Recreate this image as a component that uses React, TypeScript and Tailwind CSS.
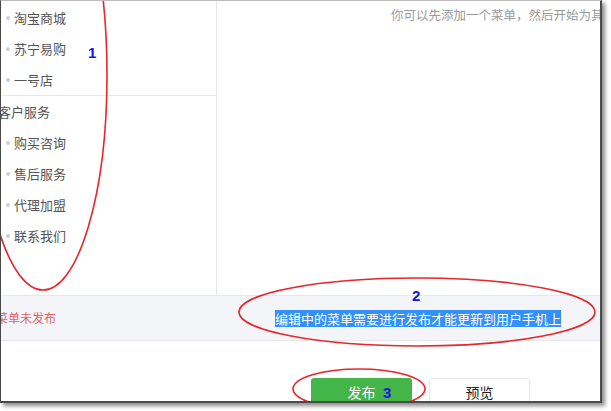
import React from "react";

const groups = [
    { title: null, items: ["淘宝商城", "苏宁易购", "一号店"] },
    { title: "客户服务", items: ["购买咨询", "售后服务", "代理加盟", "联系我们"] },
];

function SubItem({ label }: { label: string }) {
    return (
        <div className="h-[31px] flex items-center pl-[5px]">
            <span className="w-[4px] h-[4px] rounded-full bg-[#cfcfcf]" />
            <span className="ml-[4px] text-[13px] text-[#555]">{label}</span>
        </div>
    );
}

export default function App() {
    return (
        <div
            className="w-[611px] h-[411px] bg-white"
            style={{ fontFamily: '"Noto Sans CJK SC", "Liberation Sans", sans-serif' }}
        >
            {/* framed screenshot */}
            <div className="relative w-[602px] h-[403px] border-l border-t-[1px] border-t-[#bdbdbd] border-l-[#4a4a4a] border-r-2 border-r-[#4a4a4a] border-b-2 border-b-[#4a4a4a] shadow-[3px_3px_4px_rgba(0,0,0,0.45)] overflow-hidden flex flex-col">
                {/* menu + preview area */}
                <div className="h-[294px] shrink-0 flex">
                    <div className="w-[216px] border-r border-[#e7e7eb]">
                        <div className="pt-[1px] border-b border-[#e7e7eb]">
                            {groups[0].items.map(item => (
                                <SubItem key={item} label={item} />
                            ))}
                        </div>
                        <div className="h-[31px] flex items-center ml-[-3px] text-[13px] text-[#555]">
                            {groups[1].title}
                        </div>
                        {groups[1].items.map(item => (
                            <SubItem key={item} label={item} />
                        ))}
                    </div>
                    <div className="flex-1 min-w-0 overflow-hidden pl-[174px] pt-[5px]">
                        <p className="whitespace-nowrap text-[12.5px] leading-[18px] text-[#9a9a9a]">
                            你可以先添加一个菜单，然后开始为其设置响应内容
                        </p>
                    </div>
                </div>

                {/* status bar */}
                <div className="h-[46px] shrink-0 border-t border-b border-[#e7e7eb] bg-[#f4f5f9] flex items-center">
                    <span className="ml-[-5px] text-[12px] text-[#e15f63]">菜单未发布</span>
                    <span className="ml-[219px] bg-[#3390ff] text-white text-[13px] leading-[17px]">
                        编辑中的菜单需要进行发布才能更新到用户手机上
                    </span>
                </div>

                {/* actions */}
                <div className="flex-1 min-h-0 flex gap-[17px] pl-[310px] pt-[37px]">
                    <button className="w-[101px] h-[36px] shrink-0 flex justify-center pt-[5px] leading-[18px] rounded-[3px] bg-[#44b549] text-white text-[14px]">
                        发布
                    </button>
                    <button className="w-[101px] h-[36px] shrink-0 flex justify-center pt-[4px] leading-[18px] rounded-[3px] bg-white border border-[#e4e8eb] text-[#222] text-[14px]">
                        预览
                    </button>
                </div>

                {/* hand-drawn annotations */}
                <svg className="absolute inset-0 pointer-events-none" width="602" height="403">
                    <g fill="none" stroke="#e8262b" strokeWidth="1.6">
                        <ellipse cx="42" cy="74" rx="64" ry="215" />
                        <ellipse cx="416" cy="311" rx="178" ry="34" />
                        <ellipse cx="358" cy="388" rx="66" ry="20" />
                    </g>
                    <g fill="#1414e6" fontFamily="Liberation Sans, sans-serif" fontWeight="bold" fontSize="15">
                        <text x="87" y="57">1</text>
                        <text x="411" y="300">2</text>
                        <text x="382" y="397">3</text>
                    </g>
                </svg>
            </div>
        </div>
    );
}
